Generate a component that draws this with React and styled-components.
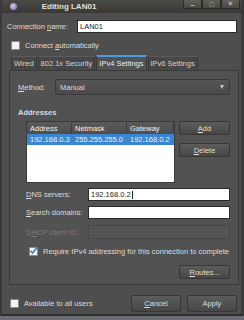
import React from 'react';
import styled, { createGlobalStyle } from 'styled-components';

const GlobalStyle = createGlobalStyle`
  html, body {
    margin: 0;
    padding: 0;
    background: #6b6e72;
  }
  body {
    font-family: "Liberation Sans", "DejaVu Sans", sans-serif;
    font-size: 7.5px;
    color: #e0e0e0;
  }
`;

const Window = styled.div`
  width: 244px;
  height: 316px;
  box-sizing: border-box;
  background: #4e4e4e;
  border-left: 2px solid #3a3a3a;
  border-right: 3px solid #3a3a3a;
  border-bottom: 2px solid #2e2e2e;
  display: flex;
  flex-direction: column;
`;

const TitleBar = styled.div`
  height: 13px;
  display: flex;
  align-items: flex-start;
  background: linear-gradient(#4b4a46, #3a3935);
`;

const AppIcon = styled.div`
  width: 7px;
  height: 7px;
  margin: 3px 0 0 8px;
  border-radius: 50%;
  background: radial-gradient(circle at 40% 40%, #d8c8f0, #7a5fa8);
`;

const Title = styled.div`
  flex: 1;
  text-align: center;
  padding-right: 62px;
  line-height: 13px;
  font-weight: bold;
  font-size: 8px;
  color: #e4e0d8;
`;

const WinButtons = styled.div`
  display: flex;
  margin-right: 1px;
`;

const WinButton = styled.div`
  width: 19px;
  height: 9px;
  box-sizing: border-box;
  border: 1px solid #2c2b28;
  border-top: none;
  background: linear-gradient(#605f5a, #48473f);
  display: flex;
  align-items: center;
  justify-content: center;
  color: #d6d2c8;
  font-size: 7px;
  font-weight: bold;
`;

const Body = styled.div`
  flex: 1;
  display: flex;
  flex-direction: column;
  padding: 7px 4px 0 5px;
`;

const NameRow = styled.div`
  display: flex;
  align-items: center;
  height: 13px;
`;

const Label = styled.span`
  color: ${p => (p.disabled ? '#7a7a7a' : '#dcdcdc')};
  white-space: nowrap;
  width: ${p => p.w || 'auto'};
  flex-shrink: 0;
`;

const TextInput = styled.div`
  flex: 1;
  height: ${p => p.h || 13}px;
  box-sizing: border-box;
  background: ${p => (p.disabled ? '#555555' : '#ffffff')};
  border: 1px solid ${p => (p.disabled ? '#474747' : '#2a2a2a')};
  color: #222;
  display: flex;
  align-items: center;
  padding-left: 2px;
`;

const Caret = styled.span`
  display: inline-block;
  width: 1px;
  height: 8px;
  background: #222;
  margin-left: 1px;
`;

const CheckRow = styled.div`
  display: flex;
  align-items: center;
  gap: 5px;
  margin: ${p => p.m || '0'};
`;

const Box = styled.div`
  width: 7px;
  height: 7px;
  background: #f4f4f4;
  border: 1px solid #8a8a8a;
  border-radius: 1px;
  position: relative;
  flex-shrink: 0;
`;

const Tabs = styled.div`
  display: flex;
  margin: 5px 0 0 4px;
  height: 15px;
`;

const Tab = styled.div`
  padding: 0 2px;
  height: ${p => (p.active ? 15 : 14)}px;
  margin-top: ${p => (p.active ? 0 : 1)}px;
  box-sizing: border-box;
  display: flex;
  align-items: center;
  background: ${p => (p.active ? '#525252' : '#474747')};
  border: 1px solid #3a3a3a;
  border-bottom: none;
  border-top: ${p => (p.active ? '2px solid #4a9be0' : '1px solid #5c5c5c')};
  color: ${p => (p.active ? '#ececec' : '#d2d2d2')};
  margin-right: 1px;
`;

const Panel = styled.div`
  margin: 0 0 0 2px;
  width: 230px;
  height: 215px;
  box-sizing: border-box;
  background: #525252;
  border: 1px solid #3a3a3a;
  padding: 8px 8px 0 8px;
  display: flex;
  flex-direction: column;
`;

const MethodRow = styled.div`
  display: flex;
  align-items: center;
  height: 16px;
`;

const Combo = styled.div`
  flex: 1;
  height: 16px;
  box-sizing: border-box;
  border: 1px solid #3a3a3a;
  border-radius: 2px;
  background: linear-gradient(#555555, #4a4a4a);
  display: flex;
  align-items: center;
  justify-content: space-between;
  padding: 0 5px 0 4px;
  color: #dcdcdc;
`;

const Arrow = styled.span`
  width: 0;
  height: 0;
  border-left: 2.5px solid transparent;
  border-right: 2.5px solid transparent;
  border-top: 4px solid #c8c8c8;
`;

const Heading = styled.div`
  font-weight: bold;
  margin-top: 13px;
  color: #dcdcdc;
`;

const Indented = styled.div`
  padding-left: 8px;
  display: flex;
  flex-direction: column;
`;

const AddrRow = styled.div`
  display: flex;
  gap: 4px;
  margin-top: 4px;
`;

const Table = styled.div`
  width: 150px;
  height: 62px;
  background: #ffffff;
  border: 1px solid #3a3a3a;
  box-sizing: border-box;
  display: flex;
  flex-direction: column;
`;

const TRow = styled.div`
  display: grid;
  grid-template-columns: 45px 55px 1fr;
  height: ${p => (p.head ? 12 : 11)}px;
  background: ${p => (p.head ? 'linear-gradient(#5a5a5a, #4e4e4e)' : p.selected ? '#3b86d0' : '#fff')};
  color: ${p => (p.head || p.selected ? '#f2f2f2' : '#222')};
`;

const Cell = styled.div`
  display: flex;
  align-items: center;
  padding-left: 3px;
  border-right: ${p => (p.head ? '1px solid #3e3e3e' : 'none')};
  white-space: nowrap;
  overflow: hidden;
`;

const ButtonCol = styled.div`
  display: flex;
  flex-direction: column;
  gap: 8px;
`;

const Button = styled.div`
  width: ${p => p.w || 51}px;
  height: ${p => p.h || 14}px;
  box-sizing: border-box;
  border: 1px solid #363636;
  border-radius: 2px;
  background: linear-gradient(#5c5c5c, #474747);
  display: flex;
  align-items: center;
  justify-content: center;
  color: #dcdcdc;
`;

const FieldRow = styled.div`
  display: flex;
  align-items: center;
  margin-top: ${p => p.mt || 0}px;
`;

const RoutesRow = styled.div`
  display: flex;
  justify-content: flex-end;
  margin-top: 9px;
`;

const Footer = styled.div`
  display: flex;
  align-items: center;
  margin-top: 10px;
  padding-left: 3px;
`;

const FooterButtons = styled.div`
  margin-left: auto;
  display: flex;
  gap: 6px;
`;

const Check = () => (
  <svg width="9" height="9" viewBox="0 0 9 9" style={{ position: 'absolute', left: -1, top: -2 }}>
    <path d="M1.5 4.8 L3.6 7 L8 1.5" fill="none" stroke="#2f7fd0" strokeWidth="1.6" />
  </svg>
);

const U = styled.span`
  text-decoration: underline;
`;

export default function App() {
  return (
    <>
      <GlobalStyle />
      <Window>
        <TitleBar>
          <AppIcon />
          <Title>Editing LAN01</Title>
          <WinButtons>
            <WinButton>–</WinButton>
            <WinButton>□</WinButton>
            <WinButton>✕</WinButton>
          </WinButtons>
        </TitleBar>
        <Body>
          <NameRow>
            <Label w="70px">Connection <U>n</U>ame:</Label>
            <TextInput>LAN01</TextInput>
          </NameRow>
          <CheckRow m="8px 0 0 4px">
            <Box />
            <Label>Connect <U>a</U>utomatically</Label>
          </CheckRow>
          <Tabs>
            <Tab>Wired</Tab>
            <Tab>802.1x Security</Tab>
            <Tab active>IPv4 Settings</Tab>
            <Tab>IPv6 Settings</Tab>
          </Tabs>
          <Panel>
            <MethodRow>
              <Label w="37px"><U>M</U>ethod:</Label>
              <Combo>
                <span>Manual</span>
                <Arrow />
              </Combo>
            </MethodRow>
            <Heading>Addresses</Heading>
            <Indented>
              <AddrRow>
                <Table>
                  <TRow head>
                    <Cell head>Address</Cell>
                    <Cell head>Netmask</Cell>
                    <Cell head>Gateway</Cell>
                  </TRow>
                  <TRow selected>
                    <Cell>192.168.0.3</Cell>
                    <Cell>255.255.255.0</Cell>
                    <Cell>192.168.0.2</Cell>
                  </TRow>
                </Table>
                <ButtonCol>
                  <Button><span><U>A</U>dd</span></Button>
                  <Button><span><U>D</U>elete</span></Button>
                </ButtonCol>
              </AddrRow>
              <FieldRow mt={5}>
                <Label w="62px"><U>D</U>NS servers:</Label>
                <TextInput>192.168.0.2<Caret /></TextInput>
              </FieldRow>
              <FieldRow mt={5}>
                <Label w="62px"><U>S</U>earch domains:</Label>
                <TextInput />
              </FieldRow>
              <FieldRow mt={6}>
                <Label w="62px" disabled>D<U>H</U>CP client ID:</Label>
                <TextInput disabled h={14} />
              </FieldRow>
              <CheckRow m="8px 0 0 3px">
                <Box><Check /></Box>
                <Label>Require IPv4 addressing for this connection to complete</Label>
              </CheckRow>
              <RoutesRow>
                <Button><span><U>R</U>outes...</span></Button>
              </RoutesRow>
            </Indented>
          </Panel>
          <Footer>
            <CheckRow>
              <Box />
              <Label>Available to all users</Label>
            </CheckRow>
            <FooterButtons>
              <Button w={50} h={17}><span><U>C</U>ancel</span></Button>
              <Button w={50} h={17}>Apply</Button>
            </FooterButtons>
          </Footer>
        </Body>
      </Window>
    </>
  );
}
